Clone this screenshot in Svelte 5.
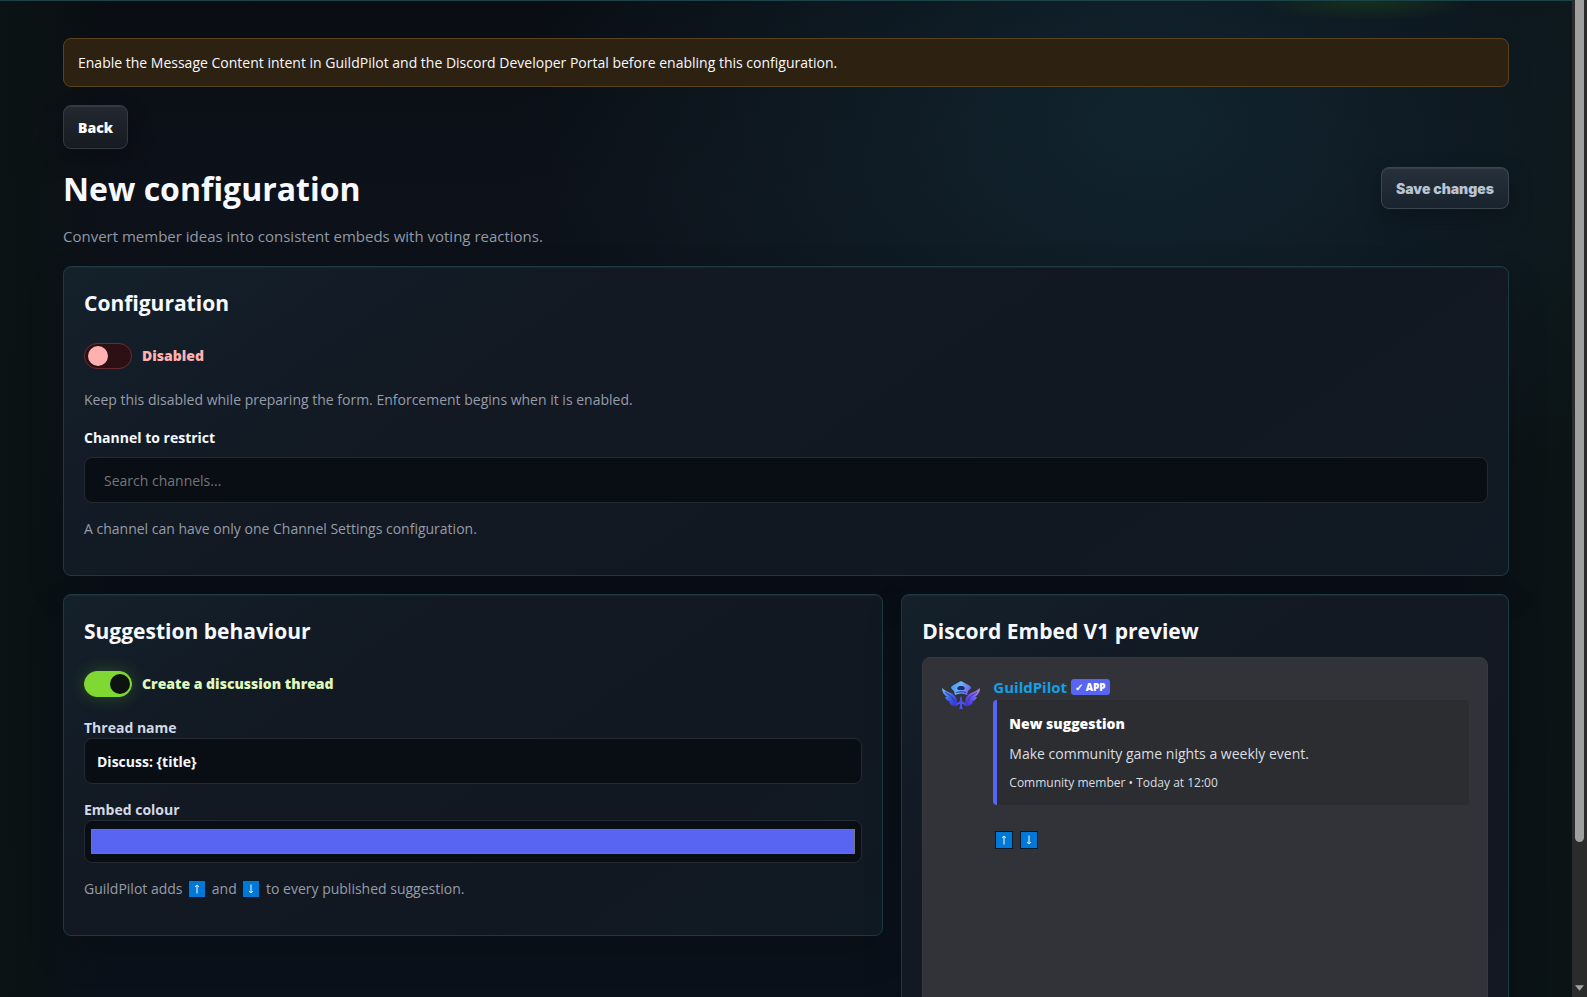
<script>
  let enabled = false;
  let createThread = true;
  let channel = "";
  let threadName = "Discuss: {title}";
  let colour = "#5865f2";
</script>

<div class="shell">
  <main>
    <div class="notice">
      Enable the Message Content intent in GuildPilot and the Discord Developer
      Portal before enabling this configuration.
    </div>

    <button class="button back">Back</button>

    <header>
      <div>
        <h1>New configuration</h1>
        <p class="lead">
          Convert member ideas into consistent embeds with voting reactions.
        </p>
      </div>
      <button class="button save">Save changes</button>
    </header>

    <section class="card">
      <h2>Configuration</h2>
      <label class="toggle">
        <input type="checkbox" bind:checked={enabled} />
        <span>{enabled ? "Enabled" : "Disabled"}</span>
      </label>
      <p class="hint">
        Keep this disabled while preparing the form. Enforcement begins when it
        is enabled.
      </p>
      <label class="channel-label" for="channel">Channel to restrict</label>
      <input
        id="channel"
        class="text search"
        type="text"
        placeholder="Search channels..."
        bind:value={channel}
      />
      <p class="hint">
        A channel can have only one Channel Settings configuration.
      </p>
    </section>

    <div class="columns">
      <section class="card">
        <h2>Suggestion behaviour</h2>
        <label class="toggle">
          <input type="checkbox" bind:checked={createThread} />
          <span>Create a discussion thread</span>
        </label>
        <div class="field">
          <label for="thread">Thread name</label>
          <input id="thread" class="text" type="text" bind:value={threadName} />
        </div>
        <div class="field">
          <label for="colour">Embed colour</label>
          <input id="colour" class="colour" type="color" bind:value={colour} />
        </div>
        <p class="hint">
          GuildPilot adds {@render arrow("up")} and {@render arrow("down")} to every
          published suggestion.
        </p>
      </section>

      <section class="card">
        <h2>Discord Embed V1 preview</h2>
        <div class="discord">
          <svg class="avatar" viewBox="0 0 40 40" aria-hidden="true">
            <defs>
              <linearGradient id="wing" x1="0" y1="0" x2="1" y2="1">
                <stop offset="0" stop-color="#7cc0f0" />
                <stop offset="0.5" stop-color="#3f62ee" />
                <stop offset="1" stop-color="#3a25c9" />
              </linearGradient>
              <linearGradient id="wing-right" x1="1" y1="0" x2="0" y2="1">
                <stop offset="0" stop-color="#c08cf0" />
                <stop offset="0.5" stop-color="#6a56ee" />
                <stop offset="1" stop-color="#3226d0" />
              </linearGradient>
              <linearGradient id="cap" x1="0" y1="0" x2="1" y2="0.3">
                <stop offset="0" stop-color="#3a8df2" />
                <stop offset="0.5" stop-color="#67b6fa" />
                <stop offset="1" stop-color="#7568ed" />
              </linearGradient>
            </defs>
            <path
              d="M1 12c4 4 9 4 12 7 2 2 3 4 3 7l1 4c-4 1-7 0-9-4h2c-3-1-5-2-6-5h2c-3-2-5-5-5-9z"
              fill="url(#wing)"
            />
            <path
              d="M39 12c-4 4-9 4-12 7-2 2-3 4-3 7l-1 4c4 1 7 0 9-4h-2c3-1 5-2 6-5h-2c3-2 5-5 5-9z"
              fill="url(#wing-right)"
            />
            <path
              d="M4 16c4 3 7 4 9 9M36 16c-4 3-7 4-9 9"
              fill="none"
              stroke="#272d74"
              stroke-width="0.8"
            />
            <path
              d="M20 5c3 2 7 3 10 6 0 2-2 3-3 4l-1 4c-4-2-8-2-12 0l-1-4c-1-1-3-2-3-4 3-3 7-4 10-6z"
              fill="url(#cap)"
            />
            <path d="M16 12l2-2h4l2 2-1 2h-6z" fill="#202d70" />
            <path d="M15 16c3-1 7-1 10 0v1c-3-1-7-1-10 0z" fill="#2639a0" />
            <path
              d="M20 20l1 2v3l4 3v1l-4-1v3l1 2h-4l1-2v-3l-4 1v-1l4-3v-3z"
              fill="#4b50f0"
            />
          </svg>
          <div class="message">
            <div class="author">
              <strong>GuildPilot</strong>
              <span class="badge">✓ APP</span>
            </div>
            <article style="border-color: {colour}">
              <h3>New suggestion</h3>
              <p>Make community game nights a weekly event.</p>
              <small>Community member • Today at 12:00</small>
            </article>
            <div class="reactions">
              {@render arrow("up")}
              {@render arrow("down")}
            </div>
          </div>
        </div>
      </section>
    </div>
  </main>

  <div class="scrollbar" aria-hidden="true">
    <div class="thumb"></div>
    <svg viewBox="0 0 10 6"><path d="M0 0h10L5 6z" fill="#a3a3a3" /></svg>
  </div>
</div>

{#snippet arrow(direction)}
  <svg class="arrow" viewBox="0 0 18 18" role="img" aria-label={direction}>
    <rect width="18" height="18" fill="#06182b" />
    <rect x="1" y="1" width="16" height="16" fill="#0078d7" />
    <path
      d={direction === "up"
        ? "M9 13.500V5M7 7l2-2 2 2"
        : "M9 4.500V13M7 11l2 2 2-2"}
      fill="none"
      stroke="#fff"
    />
  </svg>
{/snippet}

<style>
  :global(body) {
    background: #090d13;
  }
  .shell {
    display: flex;
    height: 100vh;
    overflow: hidden;
    color: #f7f9ff;
    font: 14px/24px "Segoe UI", "Open Sans", sans-serif;
  }
  .shell * {
    box-sizing: border-box;
  }
  main {
    flex: 1;
    min-width: 0;
    overflow: hidden;
    padding: 37px 63px;
    border-top: 1px solid #1c4347;
    background:
      radial-gradient(ellipse 110px 20px at 87% 0, #16301e, transparent),
      radial-gradient(ellipse 640px 440px at 73% 12%, #11242e, transparent),
      linear-gradient(90deg, #0b1313, transparent 7%, transparent 93%, #0b1414),
      linear-gradient(#090d13, #0d1119 20%, #0a1018 60%, #0a111b);
  }
  h1,
  h2,
  h3,
  p {
    margin: 0;
  }
  .notice {
    padding: 12px 14px;
    border: 1px solid #5a431a;
    border-radius: 8px;
    background: #2d2212;
    line-height: 23px;
  }
  .button {
    height: 42px;
    padding: 0 14px;
    border: 1px solid #343a43;
    border-radius: 8px;
    color: #fff;
    background: linear-gradient(#242931, #161b22);
    box-shadow:
      0 10px 24px rgba(0, 0, 0, 0.25),
      inset 0 1px 0 rgba(255, 255, 255, 0.08);
  }
  .back {
    display: block;
    margin: 18px 0;
    height: 44px;
    font: 800 14px "Segoe UI", "Open Sans", sans-serif;
  }
  .save {
    border-color: #3a4650;
    color: #bac4d4;
    background: linear-gradient(#28313b, #18232d);
    font: 900 14px Inter, sans-serif;
  }
  header {
    display: flex;
    justify-content: space-between;
    align-items: flex-start;
    margin-bottom: 18px;
  }
  h1 {
    font-size: 32px;
    line-height: 44px;
  }
  .lead {
    margin-top: 13px;
    color: #9298a5;
    font-size: 15px;
  }
  .card {
    padding: 20px;
    border: 1px solid #1e3a41;
    border-radius: 8px;
    background: linear-gradient(145deg, #14202a, #121923 30%, #121822 70%, #101a23);
    box-shadow:
      0 16px 40px rgba(0, 0, 0, 0.14),
      inset 0 1px 0 rgba(255, 255, 255, 0.05);
  }
  h2 {
    font-size: 21px;
    line-height: 32px;
  }
  .toggle {
    display: flex;
    align-items: center;
    gap: 10px;
    height: 32px;
    margin-top: 21px;
    color: #ffb1b1;
    font-weight: 800;
  }
  .toggle input {
    appearance: none;
    display: flex;
    align-items: center;
    width: 48px;
    height: 26px;
    margin: 0;
    padding: 0 3px;
    border: 1px solid #6b2a2e;
    border-radius: 13px;
    background: #2d1013;
  }
  .toggle input::before {
    content: "";
    width: 20px;
    height: 20px;
    border-radius: 50%;
    background: #ffb1b1;
  }
  .toggle input:checked {
    justify-content: flex-end;
    padding-right: 1px;
    border-color: #80d832;
    background: #80d832;
    box-shadow: 0 0 16px rgba(128, 216, 50, 0.25);
  }
  .toggle input:checked::before {
    background: #0d1311;
  }
  .toggle input:checked + span {
    color: #dff8bd;
  }
  .hint {
    margin: 14px 0;
    color: #969ca9;
  }
  .toggle + .hint {
    margin-top: 16px;
  }
  .channel-label,
  .field label {
    display: block;
    font-weight: 700;
  }
  .text,
  .colour {
    display: block;
    width: 100%;
    height: 46px;
    padding: 0 12px;
    border: 1px solid #242a33;
    border-radius: 8px;
    color: #f7f9ff;
    background: #090d14;
    font: 700 14px "Segoe UI", "Open Sans", sans-serif;
  }
  .search {
    margin-top: 7px;
    padding: 0 19px;
    font-weight: 400;
  }
  .search::placeholder {
    color: #757575;
  }
  .field {
    margin-top: 16px;
  }
  .toggle + .field {
    margin-top: 18px;
  }
  .field label {
    color: #d3d9e6;
    line-height: 20px;
  }
  .colour {
    height: 43px;
    padding: 4px;
  }
  .columns {
    display: grid;
    grid-template-columns: 1.35fr 1fr;
    align-items: start;
    gap: 18px;
    margin-top: 18px;
  }
  .arrow {
    width: 18px;
    height: 18px;
    margin: 0 2px;
    vertical-align: -4px;
  }
  .discord {
    display: flex;
    gap: 12px;
    min-height: 480px;
    margin-top: 10px;
    padding: 18px;
    border: 1px solid #38393f;
    border-radius: 8px;
    background: #323338;
  }
  .avatar {
    flex: none;
    width: 40px;
    height: 40px;
  }
  .message {
    flex: 1;
    min-width: 0;
  }
  .author {
    display: flex;
    align-items: center;
    gap: 4px;
    height: 22px;
    margin-bottom: 2px;
    color: #12a0e8;
    font-size: 15px;
  }
  .badge {
    padding: 0 4px;
    border-radius: 3px;
    color: #fff;
    background: #5865f2;
    font-weight: 800;
    font-size: 10px;
    line-height: 16px;
  }
  article {
    padding: 12px;
    border-left: 4px solid;
    border-radius: 4px;
    color: #dbdee1;
    background: #2b2d31;
  }
  h3 {
    color: #fff;
    font-weight: 800;
    font-size: 14px;
    line-height: 24px;
  }
  article p {
    margin: 6px 0 7px;
  }
  small {
    display: block;
    font-size: 12px;
    line-height: 20px;
  }
  .reactions {
    display: flex;
    gap: 3px;
    margin-top: 26px;
  }
  .scrollbar {
    display: flex;
    flex-direction: column;
    justify-content: space-between;
    align-items: center;
    width: 15px;
    padding-bottom: 6px;
    background: #2b2b2b;
  }
  .thumb {
    width: 9px;
    height: 85%;
    border-radius: 0 0 5px 5px;
    background: #9f9f9f;
  }
  .scrollbar svg {
    width: 9px;
    height: 6px;
  }
</style>
